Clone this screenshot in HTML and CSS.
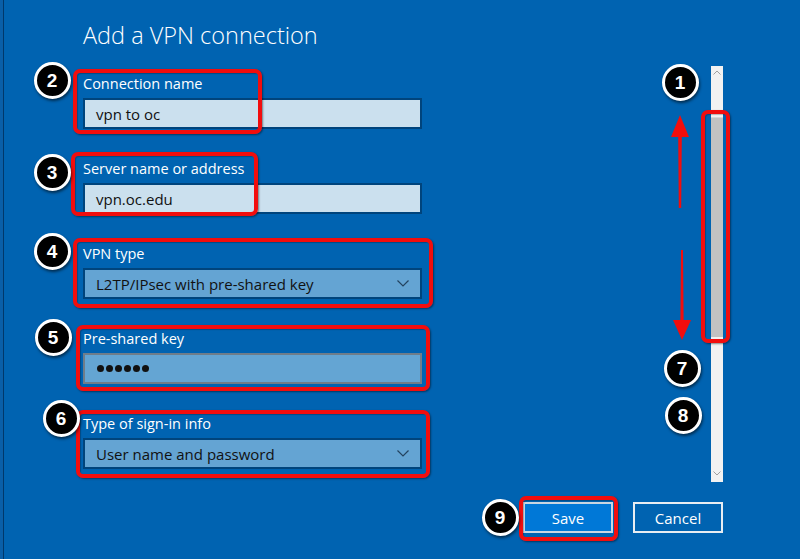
FILE: index.html
```html
<!DOCTYPE html>
<html lang="en">
<head>
<meta charset="utf-8">
<title>Add a VPN connection</title>
<link rel="stylesheet" href="styles.css">
</head>
<body>
<div class="window">
  <div class="content">
    <main class="form">
      <h1 class="title">Add a VPN connection</h1>
      <div class="field">
        <label class="label">Connection name</label>
        <div class="input input-light">vpn to oc</div>
      </div>
      <div class="field">
        <label class="label">Server name or address</label>
        <div class="input input-light">vpn.oc.edu</div>
      </div>
      <div class="field">
        <label class="label">VPN type</label>
        <div class="input input-select">
          <span>L2TP/IPsec with pre-shared key</span>
          <svg class="chevron" width="12" height="7" viewBox="0 0 12 7"><polyline points="0.5,0.5 6,6 11.5,0.5" fill="none" stroke="#24435f" stroke-width="1.2"/></svg>
        </div>
      </div>
      <div class="field">
        <label class="label">Pre-shared key</label>
        <div class="input input-secret" aria-label="••••••"><span class="dot"></span><span class="dot"></span><span class="dot"></span><span class="dot"></span><span class="dot"></span><span class="dot"></span></div>
      </div>
      <div class="field">
        <label class="label">Type of sign-in info</label>
        <div class="input input-select">
          <span>User name and password</span>
          <svg class="chevron" width="12" height="7" viewBox="0 0 12 7"><polyline points="0.5,0.5 6,6 11.5,0.5" fill="none" stroke="#24435f" stroke-width="1.2"/></svg>
        </div>
      </div>
    </main>
    <div class="scrollbar">
      <svg class="sb-arrow" width="8" height="5" viewBox="0 0 8 5"><polyline points="0.5,4.5 4,1 7.5,4.5" fill="none" stroke="#a0a0a0" stroke-width="1"/></svg>
      <div class="thumb"></div>
      <div class="track-rest"></div>
      <svg class="sb-arrow" width="8" height="5" viewBox="0 0 8 5"><polyline points="0.5,0.5 4,4 7.5,0.5" fill="none" stroke="#a0a0a0" stroke-width="1"/></svg>
    </div>
  </div>
  <footer class="actions">
    <button class="btn btn-primary">Save</button>
    <button class="btn">Cancel</button>
  </footer>

  <div class="annot">
    <div class="hl hl-a"></div>
    <div class="hl hl-b"></div>
    <div class="hl hl-c"></div>
    <div class="hl hl-d"></div>
    <div class="hl hl-e"></div>
    <div class="hl hl-save"></div>
    <div class="hl hl-scroll"></div>

    <svg class="arrow arrow-up" width="20" height="96" viewBox="0 0 20 96"><polygon points="10,0 19,22 11.8,22 11.2,93 8.8,93 8.2,22 1,22" fill="#f20d0d"/></svg>
    <svg class="arrow arrow-down" width="20" height="92" viewBox="0 0 20 92"><polygon points="9,0 11,0 11.6,70 19,70 10,90 1,70 8.4,70" fill="#f20d0d"/></svg>

    <div class="badge b1">1</div>
    <div class="badge b2">2</div>
    <div class="badge b3">3</div>
    <div class="badge b4">4</div>
    <div class="badge b5">5</div>
    <div class="badge b6">6</div>
    <div class="badge b7">7</div>
    <div class="badge b8">8</div>
    <div class="badge b9">9</div>
  </div>
</div>
</body>
</html>
```
FILE: styles.css
```css
* { box-sizing: border-box; }
html, body { margin: 0; padding: 0; }
body {
  background: #0063b1;
  width: 800px;
  height: 559px;
  overflow: hidden;
  font-family: "Open Sans", "Noto Sans", sans-serif;
}
.window {
  position: relative;
  width: 800px;
  height: 559px;
  display: flex;
  flex-direction: column;
  border-left: 3px solid #0a5fa8;
  box-shadow: inset 1px 0 0 #00386b;
}
.content {
  flex: 1;
  display: flex;
}
.form {
  width: 419px;
  padding: 19px 0 0 80px;
}
.title {
  margin: 0 0 23px;
  font-size: 23.5px;
  line-height: 32px;
  font-weight: 300;
  color: #ffffff;
  white-space: nowrap;
}
.field { margin-bottom: 30px; }
.label {
  display: block;
  font-size: 14.5px;
  line-height: 20px;
  color: #ffffff;
  margin-bottom: 4px;
  white-space: nowrap;
}
.input {
  height: 31px;
  display: flex;
  align-items: center;
  padding: 0 10px 0 11px;
  font-size: 15px;
  color: #111;
  border: 2px solid #00447c;
}
.input-light { background: #cbe0ee; }
.input-select {
  background: #64a4d3;
  justify-content: space-between;
}
.chevron { margin-right: 1px; }
.input-secret {
  background: #64a5d3;
  border-color: #6f7d8a;
  gap: 2px;
  padding-left: 12px;
}
.dot {
  width: 7px;
  height: 7px;
  border-radius: 50%;
  background: #111;
}
.scrollbar {
  margin: 66px 0 0 289px;
  width: 12px;
  height: 416px;
  background: #f2f2f2;
  display: flex;
  flex-direction: column;
  align-items: center;
}
.sb-arrow { margin-top: 4px; flex: none; }
.thumb {
  margin-top: 42px;
  width: 12px;
  height: 220px;
  background: #c2c2c2;
  border-top: 1px solid #d8d8d8;
}
.track-rest { flex: 1; }
.scrollbar .sb-arrow:last-child { margin: 0 0 6px; }

.actions {
  display: flex;
  justify-content: flex-end;
  gap: 20px;
  padding: 0 77px 26px 0;
}
.btn {
  width: 90px;
  height: 31px;
  border: 2px solid #e8edf2;
  background: transparent;
  color: #ffffff;
  font-family: "Open Sans", "Noto Sans", sans-serif;
  font-size: 15px;
  padding: 0;
}
.btn-primary {
  background: #0078d7;
  border-color: #c9d6e2;
}

/* annotations overlay */
.annot { position: absolute; inset: 0 0 0 -3px; pointer-events: none; }
.hl {
  position: absolute;
  border: 4px solid #f20d0d;
  border-radius: 7px;
  box-shadow: 1px 1px 2px rgba(0,0,0,0.45), inset 1px 1px 1px rgba(0,0,0,0.25);
}
.hl-a { left: 73px; top: 69px; width: 189px; height: 65px; }
.hl-b { left: 71px; top: 152px; width: 187px; height: 64px; }
.hl-c { left: 73px; top: 238px; width: 360px; height: 70px; }
.hl-d { left: 76px; top: 325px; width: 354px; height: 66px; }
.hl-e { left: 76px; top: 410px; width: 354px; height: 68px; }
.hl-save { left: 519px; top: 496px; width: 99px; height: 45px; }
.hl-scroll { left: 701px; top: 110px; width: 29px; height: 233px; }

.arrow { position: absolute; }
.arrow-up { left: 670px; top: 115px; }
.arrow-down { left: 672px; top: 250px; }

.badge {
  position: absolute;
  width: 37px;
  height: 37px;
  margin: -18.5px 0 0 -18.5px;
  border-radius: 50%;
  background: #000;
  border: 3px solid #fff;
  box-shadow: 1px 2px 3px rgba(0,0,0,0.55);
  color: #fff;
  font-family: "Liberation Sans", Arial, sans-serif;
  font-weight: bold;
  font-size: 19px;
  line-height: 31px;
  text-align: center;
}
.b1 { left: 680px; top: 82px; }
.b2 { left: 52px; top: 80px; }
.b3 { left: 52px; top: 172px; }
.b4 { left: 52px; top: 251px; }
.b5 { left: 53px; top: 337px; }
.b6 { left: 61px; top: 418px; }
.b7 { left: 682px; top: 368px; }
.b8 { left: 683px; top: 415px; }
.b9 { left: 500px; top: 517px; }
```
